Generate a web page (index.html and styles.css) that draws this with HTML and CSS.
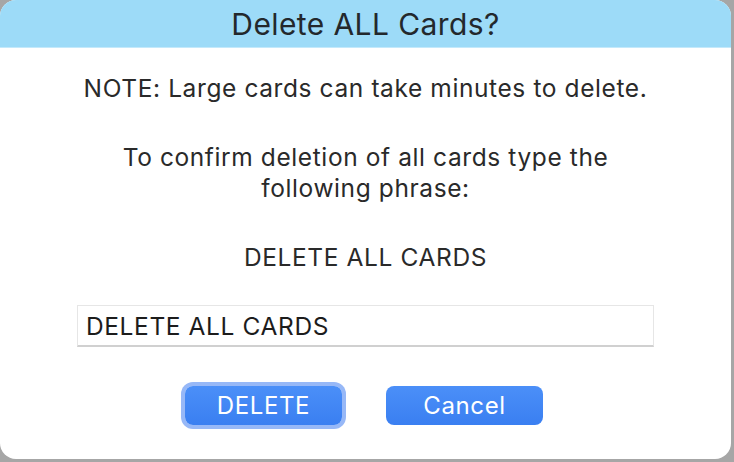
FILE: index.html
```html
<!DOCTYPE html>
<html lang="en">

<head>
  <meta charset="UTF-8" />
  <title>Delete ALL Cards?</title>
  <link rel="stylesheet" href="styles.css">
</head>

<body>
  <div class="dialog">
    <div class="dialog-header">
      <h1>Delete ALL Cards?</h1>
    </div>

    <div class="dialog-body">
      <p class="note">NOTE: Large cards can take minutes to delete.</p>
      <p class="confirm">To confirm deletion of all cards type the<br>following phrase:</p>
      <p class="phrase">DELETE ALL CARDS</p>

      <input class="phrase-input" type="text" value="DELETE ALL CARDS">

      <div class="actions">
        <button class="btn btn-focus">DELETE</button>
        <button class="btn">Cancel</button>
      </div>
    </div>
  </div>
</body>

</html>
```

FILE: styles.css
```css
* {
  box-sizing: border-box;
  margin: 0;
  padding: 0;
  font-family: Inter, 'Liberation Sans', Arial, sans-serif;
  letter-spacing: 0.6px;
}

body {
  background-color: #a6a6a6;
  width: 734px;
  height: 462px;
  overflow: hidden;
}

.dialog {
  width: 731px;
  height: 459px;
  background: #fff;
  border-radius: 16px;
  overflow: hidden;
  display: flex;
  flex-direction: column;
}

.dialog-header {
  height: 48px;
  flex-shrink: 0;
  background-color: #9ddbf8;
  border-bottom: 1px solid #c4e9fb;
  display: flex;
  align-items: center;
  justify-content: center;
}

.dialog-header h1 {
  font-size: 30px;
  font-weight: normal;
  color: #23282c;
  line-height: 34px;
  letter-spacing: 0.4px;
}

.dialog-body {
  display: flex;
  flex-direction: column;
  align-items: center;
  color: #2a2a2a;
  font-size: 24.5px;
  line-height: 31px;
}

.note {
  margin-top: 25px;
}

.confirm {
  margin-top: 38px;
  text-align: center;
}

.phrase {
  margin-top: 38px;
}

.phrase-input {
  margin-top: 32px;
  width: 577px;
  height: 42px;
  border: 1px solid #e6e6e6;
  border-bottom: 2px solid #d0d0d0;
  padding: 0 8px;
  font-size: 24.5px;
  color: #1c1c1c;
  outline: none;
}

.actions {
  margin-top: 39px;
  margin-right: 3px;
  display: flex;
  gap: 44px;
}

.btn {
  width: 157px;
  height: 39px;
  border: none;
  border-radius: 8px;
  background: linear-gradient(#4b8ff8, #3a7ff1);
  color: #fff;
  font-size: 24px;
}

.btn-focus {
  box-shadow: 0 0 0 4px #97b8f7;
}
```
